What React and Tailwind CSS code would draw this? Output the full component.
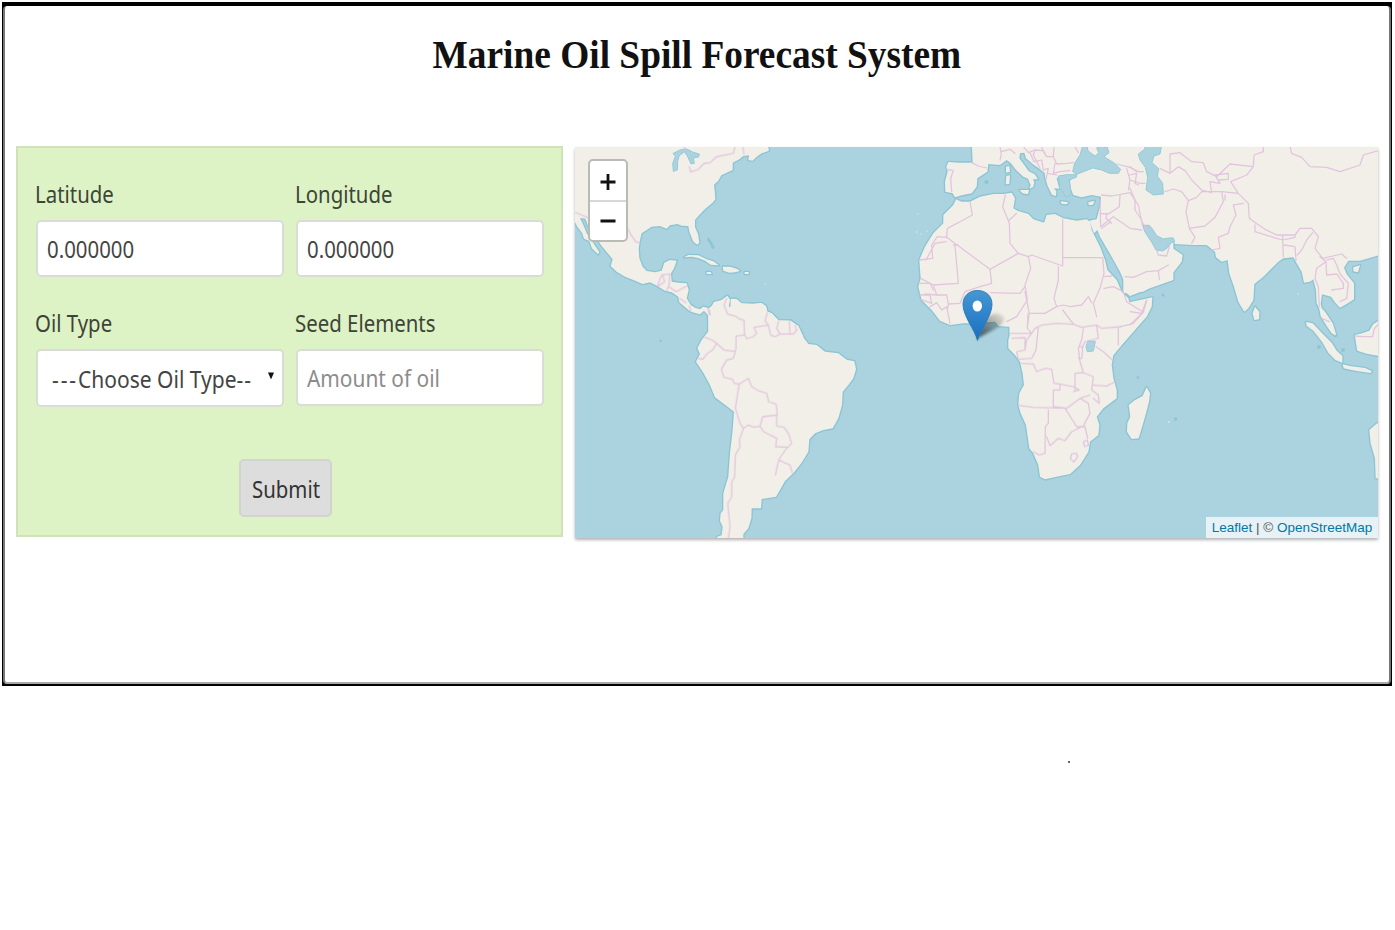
import React from "react";

// Each sheet of the map is drawn at three units to the pixel from its own origin.
const SHEETS = {
  america: "translate(570 140) scale(.33333)",
  south: "translate(680 280) scale(.33333)",
  north: "translate(900 140) scale(.33333)",
  africa: "translate(900 290) scale(.33333)",
  asia: "translate(1130 140) scale(.33333)",
  indian: "translate(1130 300) scale(.33333)",
};

const LAND = [
  ["america", "M0 0H590L597 32 575 40 560 50 548 62 535 60 537 46 520 48 508 58 488 68V90L470 98 454 106 445 122 432 134 434 150 436 178 428 188 405 207 385 228 375 240V262L384 282 388 308 382 314 370 305 358 275 355 258 335 257 322 252 300 256 290 266 270 258 245 260 230 270 215 280 210 300 206 325 208 355 218 380 230 393 255 397 275 392 283 368 300 360 320 362 312 385 303 400 305 425 325 428 350 430 356 450 350 475 362 495 375 503 390 508 400 500 412 503 420 515 414 526 402 512 390 523 375 519 360 514 340 497 328 487 325 470 305 457 285 452 262 438 240 427 218 432 190 420 165 410 140 395 122 378 128 358 112 338 95 318 85 303 68 285 56 262 46 236 30 234 40 255 50 280 64 300 74 316 88 336 84 343 66 325 58 303 42 296 36 278 22 260 12 240Z"],
  ["america", "M342 352 355 345 385 346 410 358 430 364 446 376 422 374 405 362 385 354 365 350Z"],
  ["america", "M458 380 480 380 500 386 510 393 495 397 478 398 460 392Z"],
  ["america", "M410 396 422 396 425 402 410 402Z"],
  ["america", "M524 396 536 396 536 402 524 402Z"],
  ["america", "M414 507 425 498 432 486 455 480 472 467 478 478 475 500 482 500 482 476 500 477 515 490 550 491 575 489 588 498 592 515 605 520 625 541 662 542 684 557 700 590 415 590Z"],
  ["south", "M88 100 95 85 110 68 130 60 144 50 150 60 146 82 152 82 153 60 170 60 182 71 220 73 242 70 258 80 262 95 275 100 296 122 330 122 355 138 372 175 385 192 410 195 435 215 475 220 500 239 523 244 528 268 520 295 505 315 488 335 486 375 475 415 458 445 430 450 405 460 388 478 385 515 365 548 340 580 315 603 303 625 288 650 245 657 243 685 215 685 214 715 205 745 190 762V790H105L112 770 125 766 128 740 120 722 122 700 130 690 130 640 145 590 150 520 158 450 162 395 140 378 105 352 90 315 70 278 48 245 60 222 52 205 65 180 88 150Z"],
  ["north", "M168 178 185 185 210 185 240 170 280 162 310 162 335 158 345 175 340 205 352 212 385 222 400 238 432 248 440 225 465 222 490 235 530 242 560 238 570 245 575 270 600 320 615 360 622 390 650 420 665 455 685 475 688 487 720 480 757 472 755 500 740 530 700 575 665 615 640 645 560 670 330 620 328 560 295 558 285 545 235 550 190 550 150 555 120 542 95 510 65 480 55 440 62 415 58 360 75 320 100 280 130 250 130 225 160 195Z"],
  ["africa", "M328 90 332 130 325 150 325 175 345 195 360 215 368 250 372 285 358 310 355 345 362 370 378 405 388 475 400 490 415 525 420 560 435 568 470 560 510 552 540 525 565 485 570 455 595 435 598 405 590 380 610 355 650 325V300L640 265 635 225 640 195 665 165 700 125 740 75Z"],
  ["africa", "M740 292 750 310 747 335 738 370 728 405 716 445 695 447 681 425 682 400 691 380 686 345 702 332 728 318Z"],
  ["north", "M215 0 218 68 178 68 145 66 139 80 143 95 135 125 136 155 158 160 165 172 185 166 215 160 230 140 232 115 262 95 265 72 300 75 320 60 333 70 348 90 370 110 384 116 392 135 388 147 400 140 403 127 399 118 414 118 404 103 386 94 368 68 358 55 360 40 373 38 378 55 398 72 420 88 434 98 436 115 443 138 456 164 468 168 469 154 462 145 478 146 470 115 480 108 500 105 520 112 510 122 512 145 520 165 545 172 575 165 603 170 601 195 590 238 568 242 582 280 592 270 600 290 635 350 660 395 675 430 680 460 690 468 750 445 820 420V0Z"],
  ["north", "M318 80 328 78 330 95 318 98ZM319 108 330 106 328 132 317 133ZM358 150 387 150 384 163 368 160ZM482 184 505 187 500 193 484 191ZM565 187 584 182 578 195 566 195Z"],
  ["asia", "M-20 0V460L40 455 80 430 120 410 155 365 158 345 128 325 122 312 100 332 78 328 65 305 45 275 40 256 58 256 80 285 100 295 125 295 135 312 190 315 230 315 255 335 258 352 275 365 293 360 298 400 312 440 325 485 343 515 355 505 370 480 373 432 400 410 445 365 460 355 490 352 500 370 515 395 522 428 540 425 550 418 558 450 560 490 570 510 583 540 592 560 615 588 608 560 600 542 578 520 572 492 576 463 603 470 616 488 630 503 650 492 672 478 672 430 650 403 642 383 655 362 690 362 745 346 760 340V0Z"],
  ["asia", "M375 500 388 516 387 538 373 540 368 520ZM670 382 690 376 684 397 670 394Z"],
  ["indian", "M566 15 585 35 608 70 619 106 605 100 585 70 572 48ZM528 66 548 70 575 98 605 128 620 152 637 168V188L616 180 595 158 576 125 550 92 530 77ZM638 193 660 198 705 204 725 213 722 219 680 213 641 205ZM760 55 730 72 718 92 696 100 674 105 682 152 710 161 735 166 760 170ZM760 360 736 374 718 390 722 430 735 475 737 534 760 540Z"],
];

const WATER = [
  ["america", "M310 40 330 30 350 27 370 37 388 42 386 51 370 54 373 70 363 72 352 48 343 35 327 48 323 65 322 90 310 94 308 70 316 50Z"],
  ["north", "M550 10 540 45 524 70 518 95 530 103 548 96 578 84 605 90 628 100 655 100 662 88 644 70 612 50 627 38 622 22 600 18 590 24 596 38 586 48 576 42 564 32 560 10Z"],
  ["north", "M476 108 500 104 530 104 530 111 507 120 515 163 498 172 486 152 480 145Z"],
  ["asia", "M46 10 44 28 25 42 30 60 46 82 53 112 48 150 70 165 100 162 98 130 82 108 86 86 66 68 72 48 90 42 96 10Z"],
  ["asia", "M40 256 58 256 68 268 80 287 100 297 118 294 130 294 134 306 124 308 112 324 98 333 78 330 66 308 54 290 44 274Z"],
  ["africa", "M565 153 586 154 580 183 562 185 558 170Z"],
];

const BORDERS = [
  ["america", "M18 218 38 226 60 236M172 265 185 288 198 306 210 308M340 20 348 30M358 80 362 96 385 88 402 70 420 68 440 50 470 44 490 40 495 20M518 18 522 42M262 438 275 405 300 402 296 440 318 455 355 436M278 405 284 425 265 438M298 432 290 452M330 476 348 488M358 498 362 512M414 508 418 522"],
  ["south", "M88 90 90 105M140 55 132 75 142 102 165 108 180 118 192 120 193 160 200 176 220 170 230 160 222 142 265 135 255 122 262 98M265 135 272 165 285 170 300 162 340 162 350 150 345 135M296 124 290 145 300 162M328 124 330 160M192 165 168 168 168 205 160 235M75 172 100 182 110 190 132 210 162 214M110 190 98 210 80 222 68 238 52 234M160 235 140 240 124 268 132 292 158 298 162 310 178 312 205 295 215 320 235 332 260 340 266 365 288 372 292 405M178 312 172 345 166 385 180 430 190 445 205 435 222 442 240 438 248 410 290 405 290 438 312 442 325 460 335 490 320 505 302 530 296 540 286 585M240 438 250 455 290 475 287 500 325 502M296 540 330 555 338 582M190 447 178 480 180 500 166 525 164 590 155 605 155 650 143 670 150 740 145 775"],
  ["north", "M215 68 235 78 260 84M140 88 160 92 152 115 155 155M300 20 304 45 300 60M304 35 330 28 345 40M370 20 385 38 405 30 400 45 420 85M390 38 402 65 425 60 430 90 445 85 438 120M405 30 430 32 440 50 460 50 470 72 500 70 520 68M440 50 430 35 425 20M460 50 462 22M525 20 535 38M465 70 460 100 480 95 510 92M442 100 470 105M210 185 217 225 190 240 142 265 140 292 270 388 355 340 330 310 328 250 308 200 316 165M328 240 350 220M140 292 112 290 95 315 98 355 58 360M78 360 105 310 138 305M165 315 175 430 100 435 62 415M175 315 160 315M270 388 275 430 240 440 195 455 180 490 145 492 140 465 110 465 100 435M355 340 385 350 395 345 488 378 488 238M490 353 608 353M385 350 392 385 375 435 382 480 350 530 320 545M272 458 360 460 375 440M475 380 475 420 462 475 470 500 435 520 390 520M375 455 388 520 382 560M470 500 490 495 510 500 545 495 565 470 575 488M488 510 520 552M608 353 612 400 600 445 580 490 590 530M612 445 640 440 670 455 680 485 730 517 740 480M612 410 635 408M730 517 700 550 662 560M60 465 90 465 95 490 62 478M90 500 110 488 125 510 140 500 150 550M60 430 90 430 100 450M110 465 75 462M145 492 142 510M605 165 635 168 690 158 715 195 725 245 745 275M660 165 658 200 625 222 600 220M600 180 602 260 630 238 640 230 690 265 725 270M620 220 618 235 635 250M605 265 632 245M650 72 690 82 715 95M680 85 690 120 685 150M690 105 710 100 705 130 715 135M675 410 700 412 740 395 775 392 805 375M775 392 778 418M770 330 775 345 800 348 808 320"],
  ["africa", "M332 130 395 130 405 115 425 105 470 100 520 103 545 112 590 105 605 115 662 110M384 70 382 115 395 130 380 150 375 180 350 185 355 208 395 205 408 180 415 112M335 145 375 143 375 180M365 220 400 222 410 245 435 235 455 238 462 280 480 282 480 300 460 300 460 350 500 355 540 325 570 315M355 346 400 352 500 355M445 360 445 400 436 410 435 490 418 495 400 485M440 440 450 467 475 445 495 452 515 425 550 408 570 370 565 340 540 325M495 355 530 410 555 410 563 445M550 455 562 450 566 465 554 470ZM515 492 530 490 533 500 522 516 511 506ZM480 282 520 290 538 300 520 305M525 300 525 250 550 248 540 215 535 175 545 150 550 115M545 175 555 155 595 145 590 105M550 248 580 260 575 300 595 315 598 340 580 325M588 170 610 185 635 208M548 178 545 205 535 205M580 285 620 288 645 275M655 112 655 165M538 170 550 172"],
  ["asia", "M120 100V42L150 38 185 65 220 68 230 95 260 110 300 72 370 80 372 45 400 35V18M90 85 120 100 145 80 165 92 185 120 215 150 245 158 240 125 270 130 255 105 295 100 295 118 265 120M370 80 350 105 302 125 325 160 355 190 358 235 378 250 405 268 440 285 495 285 510 265 545 265 565 290 555 325 578 355 635 342 650 355M105 155 130 147 155 155 175 182 200 172 215 155 275 155 280 185 255 232 225 258 178 265 168 215 175 182M178 265 195 292 185 310M275 155 325 160M285 165V180M340 190 310 195 318 225 300 260 295 280 265 292 270 325 245 330M375 255V275L440 295 458 300 460 350M458 285V300L495 292 495 285M462 315 495 320 498 362M548 278 530 300 515 330 502 345M570 350 588 365 590 405 620 402 640 430 640 445 605 450M588 365 560 385 555 415 565 440 568 500M590 360 610 355 620 375 630 402 655 430 650 475 630 485M480 20 485 40 515 52 540 80 590 82 630 95 690 75 700 45 745 32M0 80 20 95 40 95M0 120 30 130 45 130M0 145 15 180 15 210 35 240 38 258"],
  ["asia", "M575 535 598 545"],
  ["indian", "M674 108 700 110 728 110 732 88 745 72M0 35 35 40 0 75M35 40 50 0"],
];

function Layer({ shapes, ...rest }) {
  return (
    <g strokeLinejoin="round" strokeLinecap="round" {...rest}>
      {shapes.map(([sheet, d], i) => (
        <path key={i} transform={SHEETS[sheet]} d={d} />
      ))}
    </g>
  );
}

function WorldMap() {
  return (
    <svg className="block h-full w-full" viewBox="575 147 803 391" preserveAspectRatio="none" aria-label="World map">
      <rect x="575" y="147" width="803" height="391" fill="#aad3df" />
      <Layer shapes={LAND} fill="#8bc5d3" stroke="#8bc5d3" strokeWidth="8" />
      <Layer shapes={LAND} fill="#f2efe9" />
      <Layer shapes={WATER} fill="#aad3df" stroke="#94cad7" strokeWidth="3" />
      <Layer shapes={BORDERS} fill="none" stroke="#dfbddb" strokeWidth="3.8" opacity=".85" />
      <g fill="#86c2d0" opacity=".8">
        <path d="M708 237l4 5 3 6-3 1-2-5-3-4z" />
        <circle cx="660.5" cy="341" r="1.2" />
        <circle cx="1138" cy="377.500" r="1.4" />
        <circle cx="1163" cy="295" r="1.5" />
        <circle cx="1175.500" cy="419" r="1.7" />
        <circle cx="986.500" cy="182" r="2" />
        <circle cx="1319" cy="347" r="2" />
        <circle cx="1343" cy="350" r="2" />
      </g>
      <g fill="#d5e5e5">
        <circle cx="917" cy="232" r=".8" />
        <circle cx="921" cy="234" r=".8" />
        <circle cx="927" cy="231" r=".8" />
        <circle cx="918" cy="214" r=".7" />
        <circle cx="1169" cy="422" r="1" />
        <circle cx="1298" cy="294" r=".8" />
        <circle cx="765" cy="284" r=".7" />
      </g>
    </svg>
  );
}

function Marker() {
  return (
    <svg className="absolute left-[384px] top-[140px] h-[56px] w-[56px]" viewBox="0 0 56 56" aria-label="Marker">
      <defs>
        <linearGradient id="pin" x1="0" y1="0" x2="0" y2="1">
          <stop offset="0" stopColor="#4697d3" />
          <stop offset="1" stopColor="#176fc2" />
        </linearGradient>
        <linearGradient id="shade" x1="0" y1="1" x2="1" y2="0">
          <stop offset="0" stopColor="#000" stopOpacity=".65" />
          <stop offset="1" stopColor="#000" stopOpacity=".04" />
        </linearGradient>
        <filter id="soft" x="-30%" y="-30%" width="160%" height="160%">
          <feGaussianBlur stdDeviation="1.8" />
        </filter>
      </defs>
      <path d="M18 52C21 44 24 32 32 28c8-4 16 1 12 7-4 7-16 10-26 17z" fill="url(#shade)" filter="url(#soft)" />
      <path d="M18.500 53.500C16 43 4 29 4 17.500 4 9 10 3.500 18.500 3.500S33 9 33 17.500C33 29 21 43 18.500 53.500z" fill="url(#pin)" stroke="#2e76b0" strokeWidth=".9" />
      <ellipse cx="18.300" cy="19" rx="4.700" ry="5.600" fill="#fff" />
    </svg>
  );
}

const field =
  "w-[248px] rounded-[5px] border-2 border-[#d9dcd7] bg-white text-[24px] leading-none text-[#444] outline-none";

function Field({ label, children }) {
  return (
    <div className="flex w-[248px] flex-col">
      <label className="flex h-[44px] items-start pt-[6px] text-[24px] leading-none">
        <span className="-ml-px inline-block origin-left scale-x-[0.85] whitespace-nowrap">{label}</span>
      </label>
      {children}
    </div>
  );
}

export default function App() {
  return (
    <main className="h-[930px] w-[1395px] overflow-hidden bg-white pl-[2px] pt-[2px] font-['Noto_Sans',sans-serif] text-[#3d4438]">
      <section className="h-[684px] w-[1390px] border-x-[1px] border-b-2 border-t-4 border-black bg-black">
        <div className="h-full rounded-[4px] border-x-2 border-b-2 border-x-[#777] border-b-[#aaa] bg-white px-[11px]">
          <h1 className="flex h-[140px] justify-center pt-[25px] font-['Liberation_Serif',serif] text-[39px] font-bold leading-[48px] text-[#111]">
            <span className="inline-block origin-center scale-x-[0.958] whitespace-nowrap">Marine Oil Spill Forecast System</span>
          </h1>
          <div className="flex gap-[12px]">
            <form className="h-[391px] w-[547px] shrink-0 border-2 border-[#cfe2b8] bg-[#ddf3c5] pl-[18px] pt-[28px]" onSubmit={(e) => e.preventDefault()}>
              <div className="flex gap-[12px]">
                <Field label="Latitude">
                  <div className={field + " flex h-[57px] items-center pl-[9px]"}>
                    <span className="inline-block origin-left scale-x-[0.85]">0.000000</span>
                  </div>
                </Field>
                <Field label="Longitude">
                  <div className={field + " flex h-[57px] items-center pl-[9px]"}>
                    <span className="inline-block origin-left scale-x-[0.85]">0.000000</span>
                  </div>
                </Field>
              </div>
              <div className="mt-[28px] flex gap-[12px]">
                <Field label="Oil Type">
                  <div className={field + " flex h-[58px] items-center justify-between pl-[14px] pr-[8px]"}>
                    <span className="w-[202px]">
                      <span className="inline-block origin-left scale-x-[0.875] whitespace-nowrap pt-[2px]">
                        <span className="tracking-[2.2px]">---</span>Choose Oil Type<span className="tracking-[1px]">--</span>
                      </span>
                    </span>
                    <svg className="mb-[4px] h-[8px] w-[6px] shrink-0" viewBox="0 0 7 8"><path d="M0 0h7L3.500 8z" fill="#111" /></svg>
                  </div>
                </Field>
                <Field label="Seed Elements">
                  <div className={field + " flex h-[57px] items-center pl-[9px]"}>
                    <span className="inline-block origin-left scale-x-[0.87] whitespace-nowrap text-[#8c8c8c]">Amount of oil</span>
                  </div>
                </Field>
              </div>
              <button className="ml-[203px] mt-[52px] flex h-[58px] w-[93px] items-center justify-center rounded-[5px] border-2 border-[#d2d4d0] bg-[#dddddd] pl-[2px] pt-[2px] text-[24px] leading-none text-[#333]">
                <span className="inline-block scale-x-[0.85]">Submit</span>
              </button>
            </form>
            <div className="relative mt-px h-[391px] w-[803px] shrink-0 shadow-[0_2px_3px_rgba(0,0,0,0.3)]">
              <WorldMap />
              <Marker />
              <div className="absolute left-[13px] top-[12px] flex h-[83px] w-[40px] flex-col overflow-hidden rounded-[5px] border-2 border-[#bcbab5] bg-white">
                <button className="flex h-[41px] items-center justify-center border-b-2 border-[#d8d8d8] pt-[3px]">
                  <svg className="h-[16px] w-[16px]" viewBox="0 0 16 16"><path d="M8 0v16M.5 8h15" stroke="#111" strokeWidth="2.800" /></svg>
                </button>
                <button className="flex flex-1 items-center justify-center">
                  <svg className="h-[16px] w-[16px]" viewBox="0 0 16 16"><path d="M.5 8h15" stroke="#111" strokeWidth="2.800" /></svg>
                </button>
              </div>
              <div className="absolute bottom-0 right-0 flex h-[21px] w-[172px] items-center justify-center whitespace-nowrap bg-white/70 font-['Liberation_Sans',sans-serif] text-[13.5px] leading-none text-[#555]">
                <span><a className="text-[#0078a8]">Leaflet</a> | © <a className="text-[#0078a8]">OpenStreetMap</a></span>
              </div>
            </div>
          </div>
        </div>
      </section>
      <div className="ml-[1066px] mt-[75px] h-[2px] w-[2px] rounded-full bg-[#333]" />
    </main>
  );
}
